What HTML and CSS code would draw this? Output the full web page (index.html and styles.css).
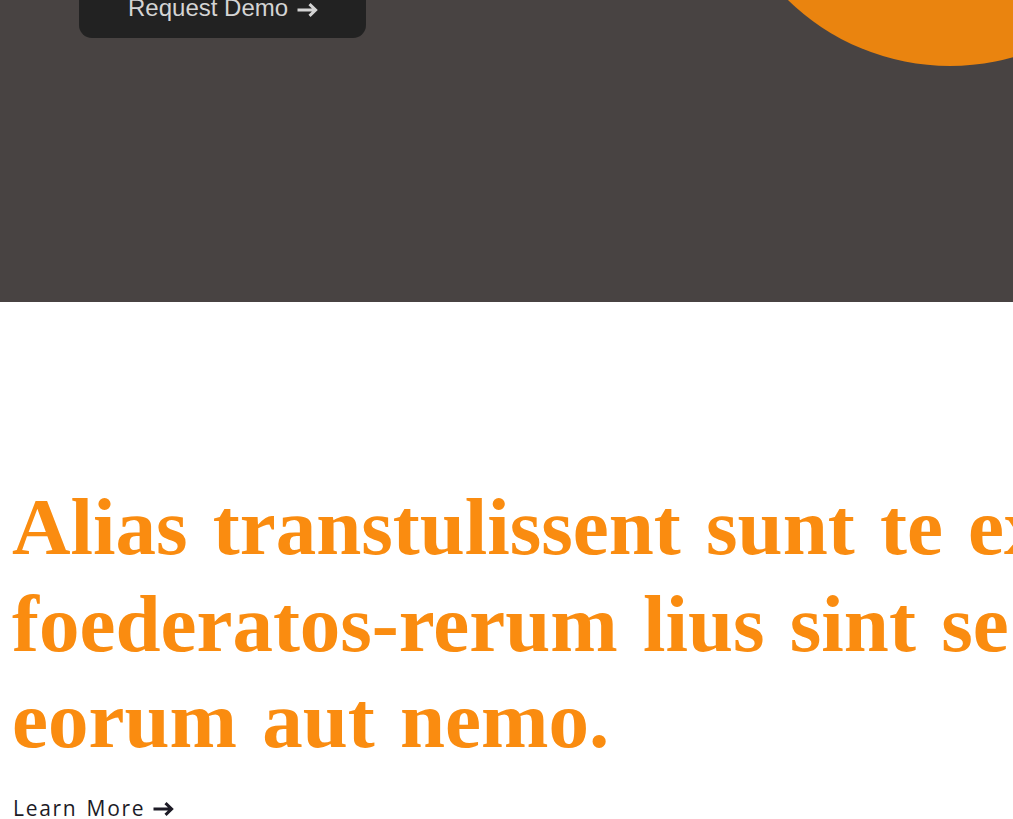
FILE: index.html
```html
<!DOCTYPE html>
<html lang="en">
<head>
<meta charset="utf-8">
<title>Demo</title>
<link rel="stylesheet" href="styles.css">
</head>
<body>
<section class="hero">
  <div class="hero-circle" aria-hidden="true"></div>
  <div class="hero-inner">
    <a class="btn-demo" href="#">Request Demo <svg class="arrow" viewBox="0 0 21 14" width="21" height="14" aria-hidden="true"><path d="M0.5 7 H18.5 M12.5 1.2 L18.6 7 L12.5 12.8" fill="none" stroke="currentColor" stroke-width="3"/></svg></a>
  </div>
</section>
<section class="intro">
  <h2 class="intro-title">
    <span class="line">Alias transtulissent sunt te ex</span>
    <span class="line">foederatos-rerum lius sint se</span>
    <span class="line">eorum aut nemo.</span>
  </h2>
  <a class="learn-more" href="#">Learn More <svg class="arrow" viewBox="0 0 21 14" width="21" height="14" aria-hidden="true"><path d="M0.5 7 H18.5 M12.5 1.2 L18.6 7 L12.5 12.8" fill="none" stroke="currentColor" stroke-width="3"/></svg></a>
</section>
</body>
</html>
```

FILE: styles.css
```css
html, body {
  margin: 0;
  padding: 0;
  background: #ffffff;
  overflow: hidden;
}

.hero {
  position: relative;
  height: 302px;
  background: #484342;
  overflow: hidden;
}

.hero-circle {
  position: absolute;
  left: 718px;
  top: -398px;
  width: 464px;
  height: 464px;
  border-radius: 50%;
  background: #ea840f;
}

.hero-inner {
  position: relative;
  display: flex;
  padding-left: 79px;
  margin-top: -22px;
}

.btn-demo {
  display: inline-flex;
  align-items: center;
  gap: 9px;
  padding: 16px 48px 16px 49px;
  background: #222222;
  border-radius: 13px;
  color: #d4d4d4;
  font-family: "Liberation Sans", Arial, sans-serif;
  font-size: 24px;
  line-height: 28px;
  text-decoration: none;
}

.btn-demo .arrow {
  flex: none;
  margin-top: 3px;
}

.intro {
  padding: 177px 0 0 12px;
}

.intro-title {
  margin: 0;
  color: #fa8c10;
  font-family: "Liberation Serif", "Times New Roman", serif;
  font-weight: 700;
  font-size: 81px;
  line-height: 96.5px;
  word-spacing: 5px;
  white-space: nowrap;
}

.intro-title .line {
  display: block;
}

.learn-more {
  display: inline-flex;
  align-items: center;
  gap: 8px;
  margin-top: 25px;
  margin-left: 1px;
  color: #1d1b26;
  font-family: "Open Sans", "Noto Sans", sans-serif;
  font-size: 21px;
  line-height: 28px;
  letter-spacing: 1.7px;
  word-spacing: 2px;
  text-decoration: none;
}

.learn-more .arrow {
  flex: none;
  margin-top: 2px;
}
```
